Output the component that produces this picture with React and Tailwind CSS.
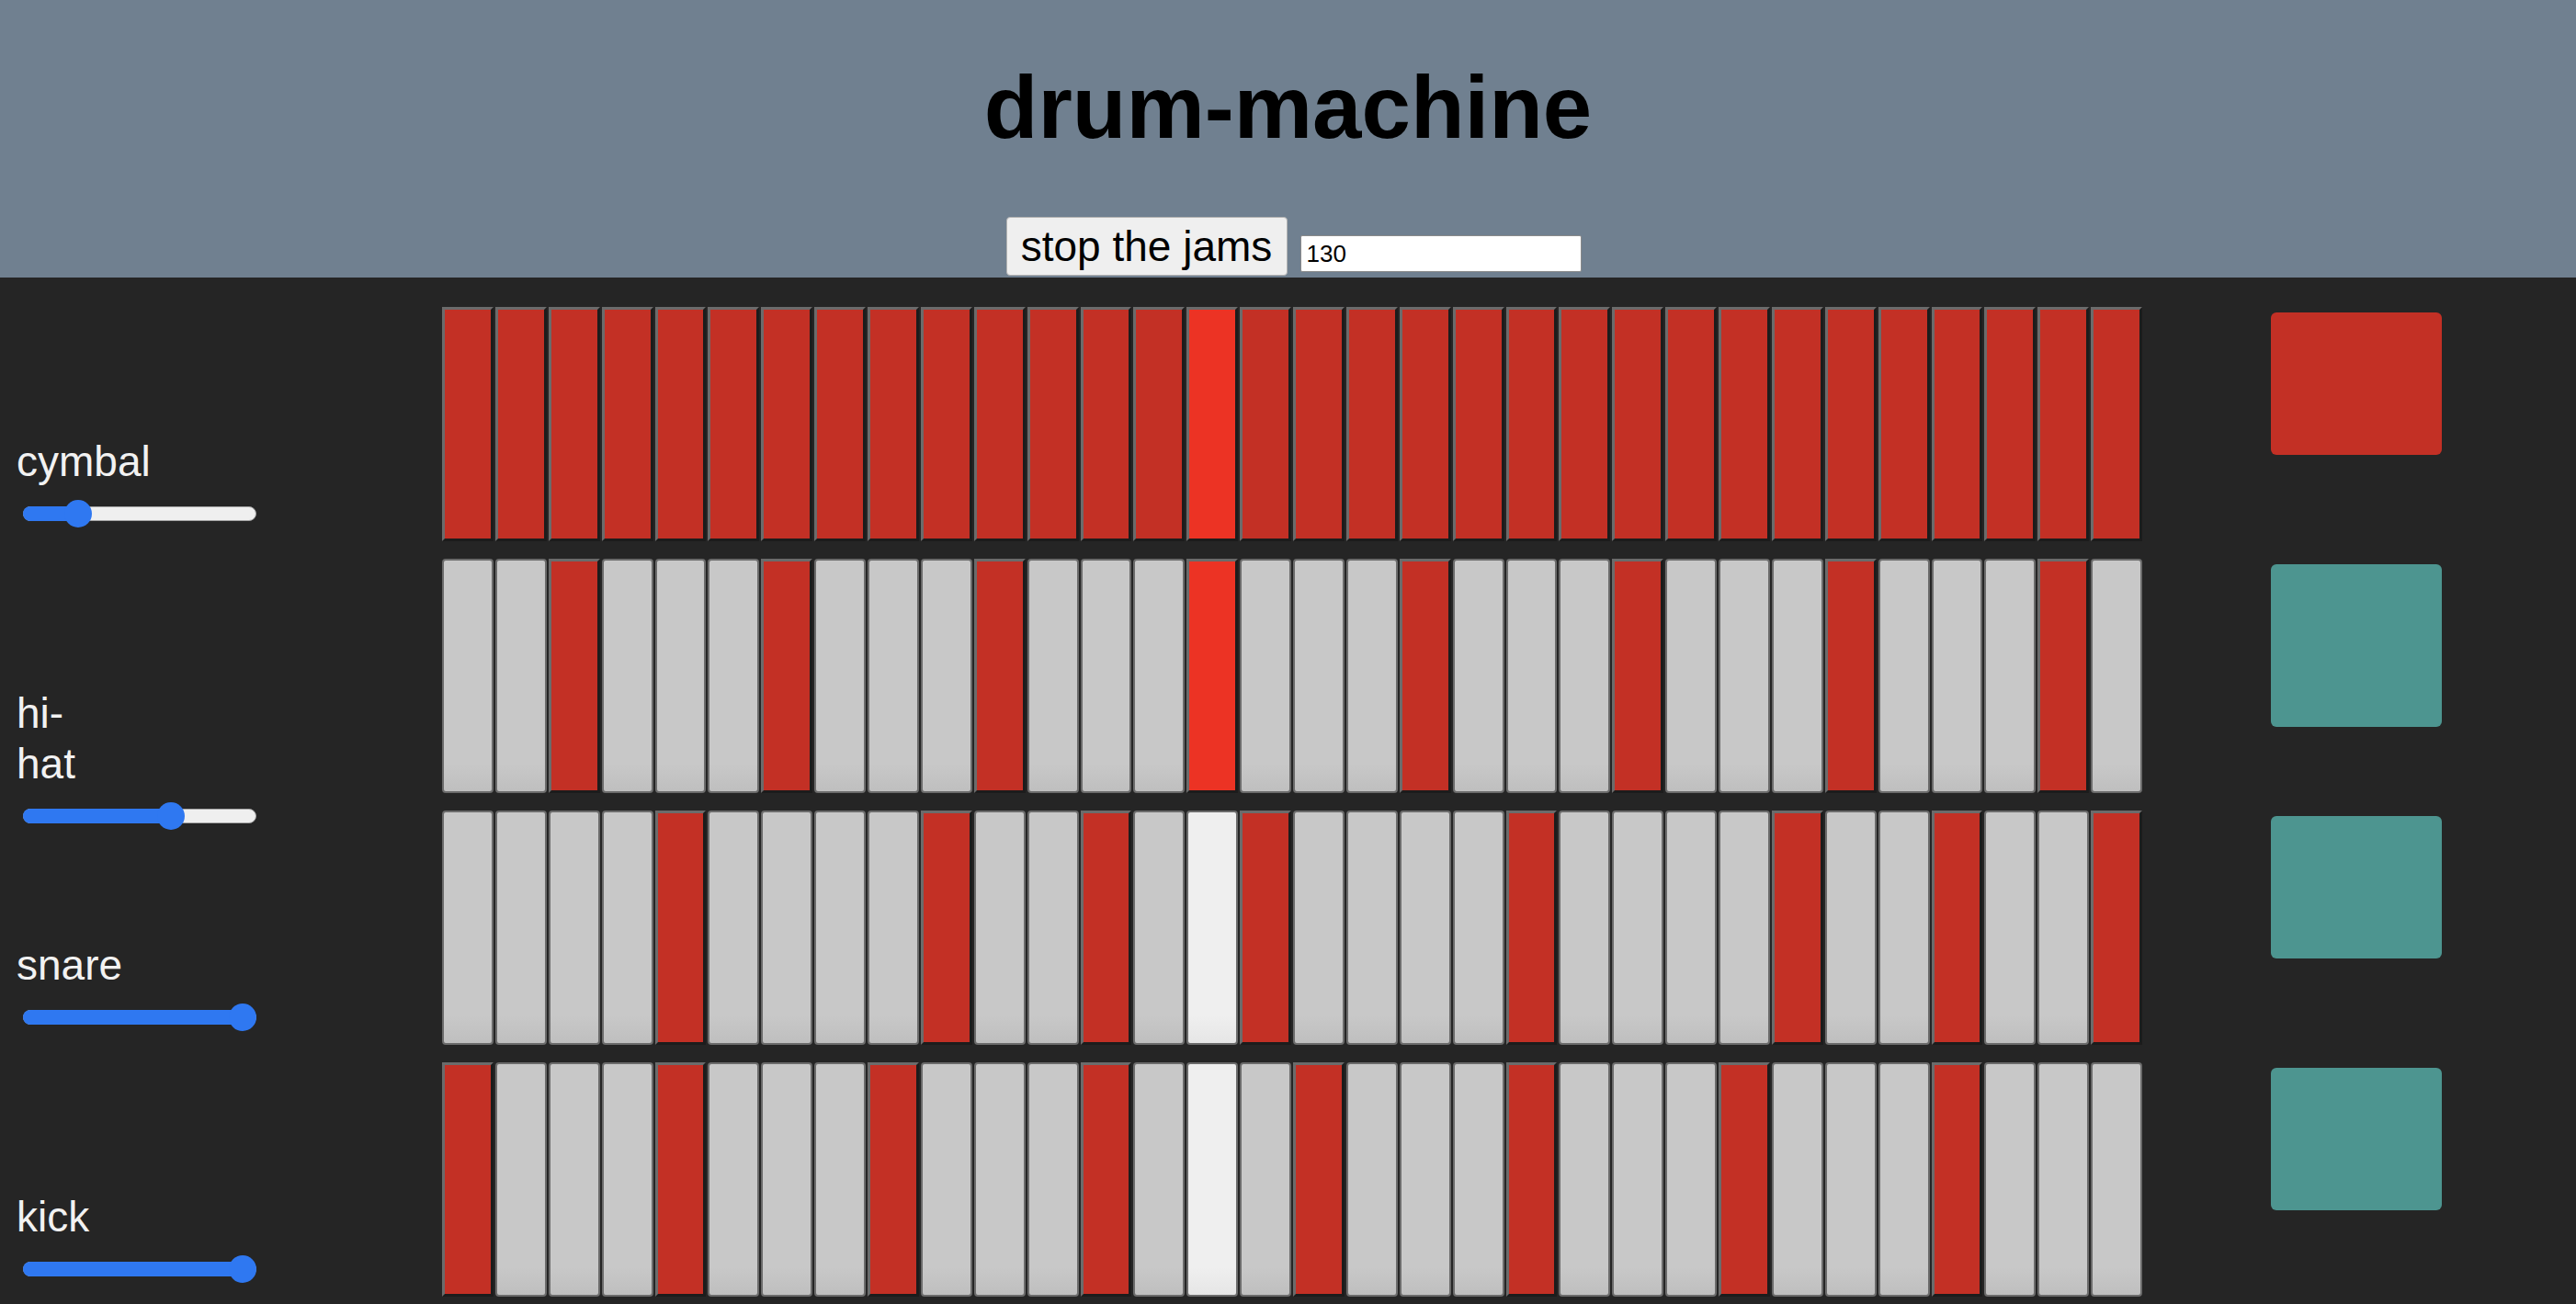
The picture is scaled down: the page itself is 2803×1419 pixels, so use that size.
import React from "react";

const STEPS = 32;
const CURRENT = 14;

const tracks = [
  {
    name: "cymbal",
    volume: 0.2,
    on: Array.from({ length: STEPS }, (_, i) => i),
    pad: "h-[155px] bg-[#c33025]",
  },
  {
    name: "hi-hat",
    volume: 0.65,
    on: [2, 6, 10, 14, 18, 22, 26, 30],
    pad: "h-[177px] bg-[#4d9590]",
  },
  {
    name: "snare",
    volume: 1,
    on: [4, 9, 12, 15, 20, 25, 28, 31],
    pad: "h-[155px] bg-[#4d9590]",
  },
  {
    name: "kick",
    volume: 1,
    on: [0, 4, 8, 12, 16, 20, 24, 28],
    pad: "h-[155px] bg-[#4d9590]",
  },
];

function Volume({ value }) {
  // thumb is 30px, track is 254px wide
  const pos = 15 + value * 224;
  return (
    <div className="relative mt-[14px] ml-[7px] h-[30px] w-[254px]">
      <div className="absolute left-0 right-0 top-[7px] h-[16px] rounded-full border border-[#a3a3a3] bg-[#efefef]" />
      <div
        className="absolute left-0 top-[7px] h-[16px] rounded-full bg-[#2f78f1]"
        style={{ width: pos }}
      />
      <div
        className="absolute top-0 h-[30px] w-[30px] rounded-full bg-[#2f78f1]"
        style={{ left: pos - 15 }}
      />
    </div>
  );
}

function Step({ on, current }) {
  if (on) {
    return (
      <div
        className={
          current
            ? "h-full border-[3px] border-t-[#6b6b6b] border-l-[#6b6b6b] border-r-[#1c1c1c] border-b-[#1c1c1c] bg-[#ec3324]"
            : "h-full border-[3px] border-t-[#6b6b6b] border-l-[#6b6b6b] border-r-[#1c1c1c] border-b-[#1c1c1c] bg-[#c33025]"
        }
      />
    );
  }
  return (
    <div
      className={
        current
          ? "h-full rounded-[4px] border-2 border-[#6b6b6b] bg-[linear-gradient(#efefef_88%,#e6e6e6)]"
          : "h-full rounded-[4px] border-2 border-[#6b6b6b] bg-[linear-gradient(#c8c8c8_88%,#bfbfbf)]"
      }
    />
  );
}

export default function App() {
  return (
    <div className="min-h-screen bg-[#252525] font-['Liberation_Sans',Arial,sans-serif]">
      <header className="h-[302px] bg-[#708090] pt-[62px]">
        <h1 className="text-center text-[96px] font-bold leading-[110px] text-black">
          drum-machine
        </h1>
        <div className="mt-[64px] flex items-start justify-center gap-[14px] pl-[12px]">
          <button className="flex h-[64px] w-[306px] items-center justify-center rounded-[4px] border border-[#b3b3b3] bg-[#efefef] text-[46px] leading-[52px] text-black">
            stop the jams
          </button>
          <input
            defaultValue="130"
            className="mt-[20px] h-[40px] w-[306px] rounded-[2px] border border-[#8a8a8a] bg-white pl-[6px] text-[26px] text-black outline-none"
          />
        </div>
      </header>

      <main className="flex flex-col gap-[19px] pt-[32px] pb-[8px]">
        {tracks.map((track) => (
          <div key={track.name} className="flex h-[255px]">
            {/* label + volume */}
            <div className="w-[481px] shrink-0 pl-[18px] pt-[141px] text-[46px] leading-[55px] text-[#f2f2f2]">
              <div className="w-[100px]">{track.name}</div>
              <Volume value={track.volume} />
            </div>

            {/* sequencer */}
            <div className="grid w-[1850px] shrink-0 grid-cols-[repeat(32,minmax(0,1fr))] gap-[2px]">
              {Array.from({ length: STEPS }, (_, i) => (
                <Step
                  key={i}
                  on={track.on.includes(i)}
                  current={i === CURRENT}
                />
              ))}
            </div>

            {/* trigger pad */}
            <div className={`ml-[140px] mt-[6px] w-[186px] shrink-0 rounded-[6px] ${track.pad}`} />
          </div>
        ))}
      </main>
    </div>
  );
}
